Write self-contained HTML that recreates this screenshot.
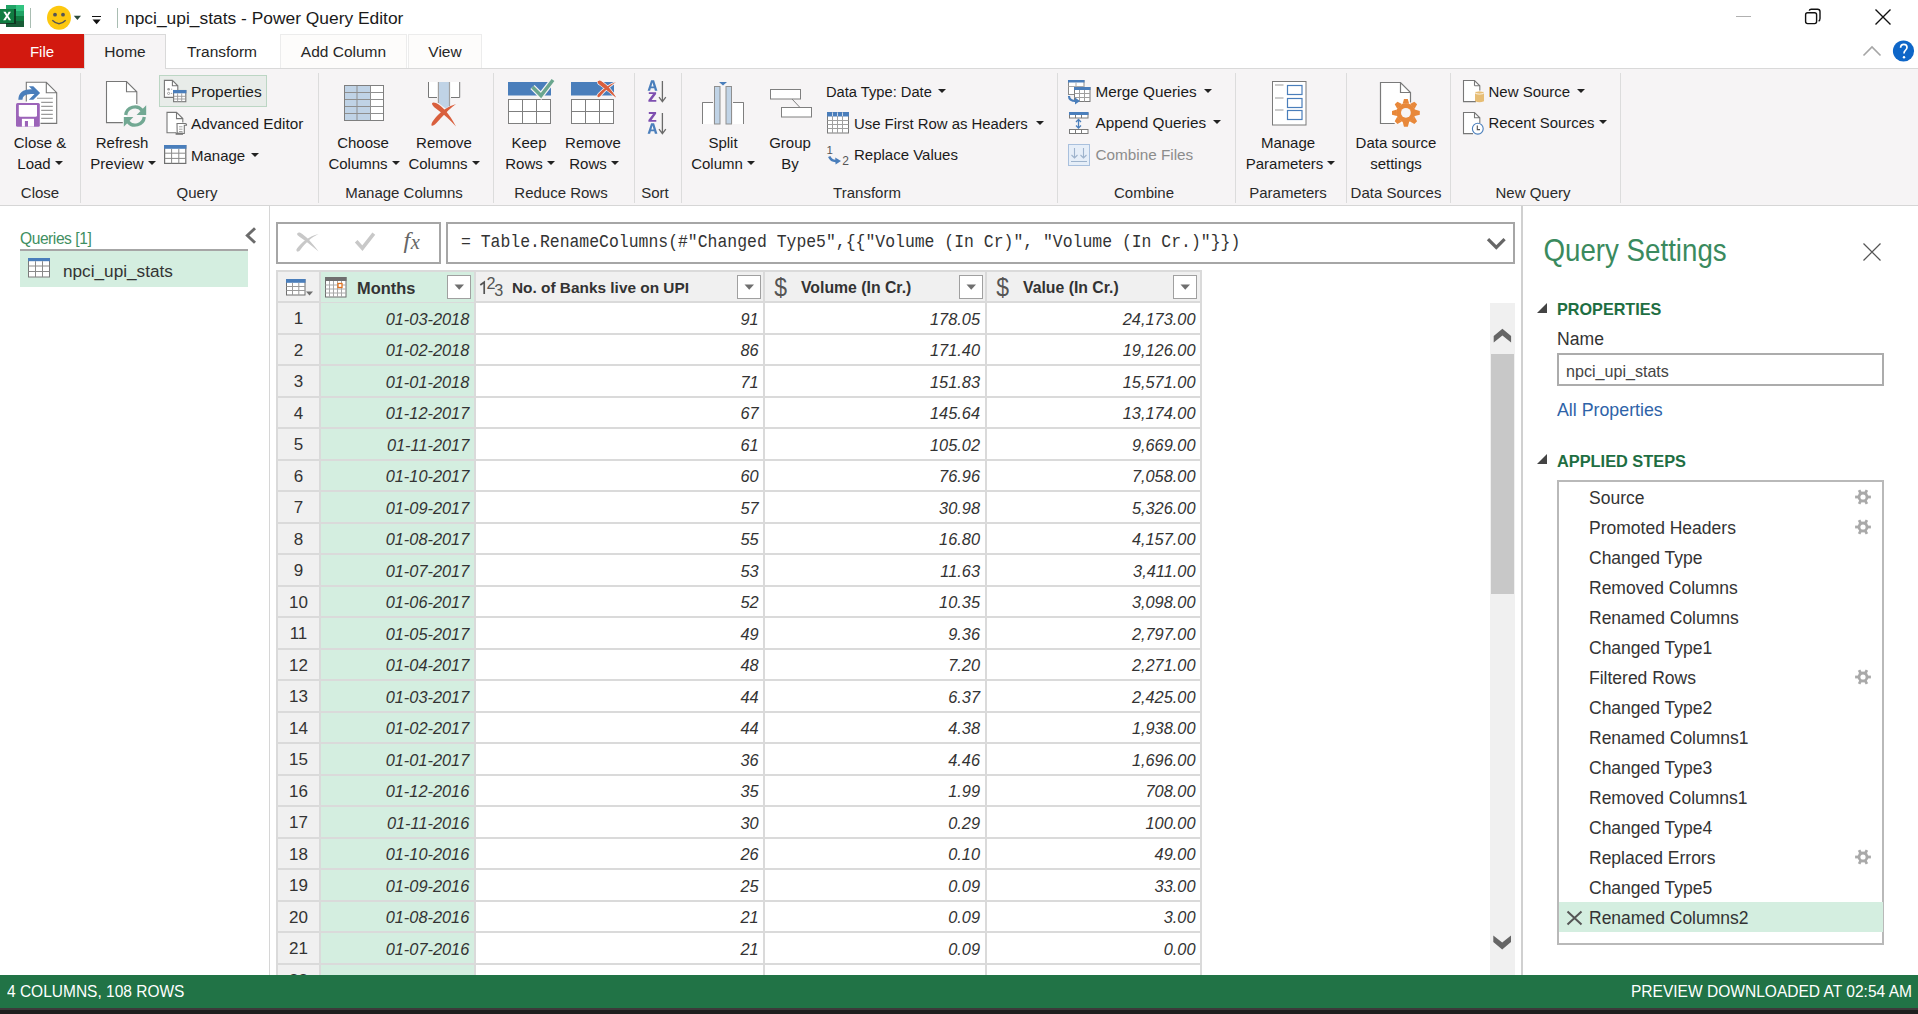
<!DOCTYPE html>
<html><head><meta charset="utf-8">
<style>
*{box-sizing:border-box;margin:0;padding:0}
html,body{width:1918px;height:1014px;overflow:hidden;background:#fff;font-family:"Liberation Sans",sans-serif;color:#262626}
.a{position:absolute;white-space:nowrap}
.t{position:absolute;white-space:nowrap;line-height:20px;height:20px}
.ribbon{position:absolute;left:0;top:69px;width:1918px;height:137px;background:#f6f4f5;border-bottom:1px solid #d6d6d6}
.sep{position:absolute;top:73px;width:1px;height:130px;background:#dcdcdc}
.glabel{position:absolute;top:182.8px;height:20px;line-height:20px;font-size:15px;color:#2a2a2a;text-align:center;white-space:nowrap}
.blabel{position:absolute;height:20px;line-height:20px;font-size:15px;color:#1b1b1b;margin-top:0.8px;text-align:center;white-space:nowrap}
.slabel{position:absolute;height:20px;line-height:20px;font-size:15px;color:#1b1b1b;white-space:nowrap}
.dd{display:inline-block;width:0;height:0;border-left:4px solid transparent;border-right:4px solid transparent;border-top:4px solid #222;vertical-align:middle;margin-left:4px;position:relative;top:-2px}
svg{position:absolute;overflow:visible}
.num{font-size:17px;color:#333}
.cell{font-size:16.35px;font-style:italic;color:#333;text-align:right}
.hdr{font-size:16.4px;font-weight:bold;color:#333;margin-top:0.8px}
.step{font-size:17.5px;color:#333}
</style></head><body>

<!-- TITLE BAR -->
<div class="a" style="left:0;top:0;width:1918px;height:34px;background:#fff"></div>
<svg style="left:0;top:4px" width="26" height="24" viewBox="0 0 26 24" shape-rendering="crispEdges">
 <rect x="6" y="1" width="18" height="6" fill="#33c481"/>
 <rect x="6" y="1" width="10" height="6" fill="#21a366"/>
 <rect x="6" y="7" width="18" height="5" fill="#21a366"/>
 <rect x="6" y="12" width="18" height="5" fill="#107c41"/>
 <rect x="6" y="17" width="18" height="6" fill="#185c37"/>
 <rect x="0" y="5" width="15.5" height="15" fill="#0e2e1c" opacity="0.85"/>
 <rect x="0" y="5" width="14" height="14" fill="#107c41"/>
 <path d="M3.3 7.8L6 12L3.1 16.2H5.6L7.2 13.4L8.8 16.2H11.1L8.3 12L10.9 7.8H8.6L7.2 10.5L5.7 7.8Z" fill="#fff" shape-rendering="geometricPrecision"/>
</svg>
<div class="a" style="left:30px;top:8px;width:1px;height:20px;background:#a9bdb2"></div>
<svg style="left:46px;top:5px" width="26" height="26" viewBox="0 0 26 26">
 <circle cx="13" cy="12.8" r="12" fill="#fdc80f"/>
 <circle cx="9" cy="9.7" r="1.9" fill="#555"/>
 <circle cx="17" cy="9.7" r="1.9" fill="#555"/>
 <path d="M6.3 15.3Q13 22 19.7 15.3" fill="none" stroke="#555" stroke-width="1.4"/>
</svg>
<svg style="left:73px;top:15px" width="9" height="6" viewBox="0 0 9 6"><path d="M0.8 0.8H8L4.4 5Z" fill="#2b4a3c"/></svg>
<div class="a" style="left:92px;top:16px;width:9px;height:1.3px;background:#111"></div>
<svg style="left:92px;top:19px" width="10" height="6" viewBox="0 0 10 6"><path d="M0.5 0.5H8.7L4.6 5.3Z" fill="#111"/></svg>
<div class="a" style="left:117px;top:8px;width:1px;height:20px;background:#a9bdb2"></div>
<div class="t" style="left:125px;top:7.7px;font-size:17.4px;color:#1a1a1a">npci_upi_stats - Power Query Editor</div>
<div class="a" style="left:1736px;top:16px;width:15px;height:1px;background:#b0b0b0"></div>
<svg style="left:1802px;top:7px" width="20" height="20" viewBox="0 0 20 20">
 <rect x="3.6" y="5.8" width="11" height="10.8" rx="2" fill="none" stroke="#111" stroke-width="1.4"/>
 <path d="M7.2 3.6Q7.6 2.2 9.2 2.2H15.6Q18 2.2 18 4.6V11.6Q18 13.6 16.6 14" fill="none" stroke="#111" stroke-width="1.4"/>
</svg>
<svg style="left:1874px;top:7.5px" width="18" height="18" viewBox="0 0 18 18">
 <path d="M1.5 1.5L16.5 16.5M16.5 1.5L1.5 16.5" stroke="#111" stroke-width="1.4"/>
</svg>

<!-- TABS -->
<div class="a" style="left:0;top:68px;width:1918px;height:1px;background:#d9d9d9"></div>
<div class="a" style="left:0;top:34px;width:84px;height:34px;background:#d2190f"></div>
<div class="t" style="left:0;top:41.8px;width:84px;text-align:center;color:#fff;font-size:15px">File</div>
<div class="a" style="left:84px;top:34px;width:82px;height:35px;background:#f6f4f5;border:1px solid #d9d9d9;border-bottom:none"></div>
<div class="t" style="left:84px;top:41.8px;width:82px;text-align:center;font-size:15.5px">Home</div>
<div class="t" style="left:166px;top:41.8px;width:112px;text-align:center;font-size:15.5px">Transform</div>
<div class="a" style="left:280px;top:34px;width:127px;height:34px;background:#fdfcfb;border:1px solid #ececec;border-bottom:none"></div>
<div class="t" style="left:280px;top:41.8px;width:127px;text-align:center;font-size:15.5px">Add Column</div>
<div class="a" style="left:408px;top:34px;width:74px;height:34px;background:#fdfcfb;border:1px solid #ececec;border-bottom:none"></div>
<div class="t" style="left:408px;top:41.8px;width:74px;text-align:center;font-size:15.5px">View</div>
<svg style="left:1862px;top:45px" width="20" height="12" viewBox="0 0 20 12">
 <path d="M1.5 10.5L10 2L18.5 10.5" fill="none" stroke="#a6a6a6" stroke-width="1.6"/>
</svg>
<svg style="left:1892px;top:40px" width="23" height="23" viewBox="0 0 23 23">
 <circle cx="11.5" cy="11" r="10.6" fill="#0e66c8"/>
 <path d="M8.6 7.8Q8.6 4.3 11.9 4.3Q15 4.3 15 7.3Q15 9.3 13.2 10.6Q12 11.5 12 13.6" fill="none" stroke="#fff" stroke-width="1.7"/>
 <circle cx="12" cy="17.3" r="1.2" fill="#fff"/>
</svg>

<!-- RIBBON -->
<div class="ribbon"></div>
<div class="sep" style="left:80px"></div>
<div class="sep" style="left:318px"></div>
<div class="sep" style="left:493px"></div>
<div class="sep" style="left:634px"></div>
<div class="sep" style="left:681px"></div>
<div class="sep" style="left:1057px"></div>
<div class="sep" style="left:1235px"></div>
<div class="sep" style="left:1346px"></div>
<div class="sep" style="left:1450px"></div>
<div class="sep" style="left:1620px"></div>

<div class="glabel" style="left:0;width:80px">Close</div>
<div class="glabel" style="left:137px;width:120px">Query</div>
<div class="glabel" style="left:344px;width:120px">Manage Columns</div>
<div class="glabel" style="left:501px;width:120px">Reduce Rows</div>
<div class="glabel" style="left:625px;width:60px">Sort</div>
<div class="glabel" style="left:807px;width:120px">Transform</div>
<div class="glabel" style="left:1084px;width:120px">Combine</div>
<div class="glabel" style="left:1228px;width:120px">Parameters</div>
<div class="glabel" style="left:1336px;width:120px">Data Sources</div>
<div class="glabel" style="left:1473px;width:120px">New Query</div>

<!-- Close & Load -->
<svg style="left:12px;top:78px" width="50" height="52" viewBox="12 78 50 52">
 <path d="M26.3 82.3H46.3L56.7 92.7V123.4H26.3Z" fill="#fff"/>
 <path d="M26.3 101.5V82.3H46.3L56.7 92.7V123.4H40.5M46.3 82.3V92.7H56.7" fill="none" stroke="#777" stroke-width="1.1" stroke-linejoin="miter"/>
 <path d="M37 98.3H52.8M41.2 102.4H52.8M41.2 106.4H52.8M41.2 110.4H52.8M41.2 114.4H52.8M41.2 118.4H52.8" stroke="#9a9a9a" stroke-width="1.1"/>
 <path d="M16 104.5Q16 103 17.5 103H38.3Q39.8 103 39.8 104.5V125.3Q39.8 126.8 38.3 126.8H17.5Q16 126.8 16 125.3Z" fill="#9c64b9"/>
 <path d="M18.8 105H37V115.3Q37 116.8 35.5 116.8H20.3Q18.8 116.8 18.8 115.3Z" fill="#fff"/>
 <path d="M21.9 118.8H34V126.6H21.9Z" fill="#fff"/>
 <rect x="24.9" y="121" width="3.1" height="5.6" fill="#9c64b9"/>
 <path d="M28.8 86.2H33.3L40.1 92.9L33.3 99.7H28.8L35.5 92.9Z" fill="#4a7ebb" stroke="#fff" stroke-width="0.8" paint-order="stroke"/>
 <path d="M18.3 99.7H22.4Q22.6 94.3 31 94.1H36V89.2H31Q18.5 89.4 18.3 99.7Z" fill="#4a7ebb"/>
</svg>
<div class="blabel" style="left:0;top:132px;width:80px">Close &amp;</div>
<div class="blabel" style="left:0;top:153px;width:80px;padding-left:0px">Load<span class="dd"></span></div>

<!-- Refresh Preview -->
<svg style="left:100px;top:76px" width="50" height="54" viewBox="100 76 50 54">
 <path d="M106.5 81.5H126.5L136.8 91.8V122.6H106.5Z" fill="#fff"/>
 <path d="M122.8 122.6H106.5V81.5H126.5L136.8 91.8V104M126.5 81.5V91.8H136.8" fill="none" stroke="#777" stroke-width="1.1" stroke-linejoin="miter"/>
 <circle cx="135" cy="116" r="8" fill="#f6f4f5"/>
 <path d="M125.7 115A9.3 9.3 0 0 1 142.2 110.4" fill="none" stroke="#72a893" stroke-width="3.3"/>
 <path d="M146.2 105.3V115H136.6Z" fill="#72a893"/>
 <path d="M144.3 117A9.3 9.3 0 0 1 127.8 121.6" fill="none" stroke="#72a893" stroke-width="3.3"/>
 <path d="M123.8 126.7V117H133.4Z" fill="#72a893"/>
</svg>
<div class="blabel" style="left:62px;top:132px;width:120px">Refresh</div>
<div class="blabel" style="left:62px;top:153px;width:120px;padding-left:2px">Preview<span class="dd"></span></div>

<!-- Properties / Advanced / Manage -->
<div class="a" style="left:159px;top:75px;width:108px;height:32px;background:#e8ece9;border:1px solid #bcd6c4"></div>
<svg style="left:160px;top:76px" width="30" height="30" viewBox="160 76 30 30">
 <path d="M164.4 80.4H172.4L177.8 85.8V97.4H164.4Z" fill="#fff"/>
 <path d="M173 97.4H164.4V80.4H172.4L177.8 85.8V90M172.4 80.4V85.8H177.8" fill="none" stroke="#777" stroke-width="1.1" stroke-linejoin="miter"/>
 <circle cx="168.6" cy="89.2" r="1.3" fill="#999"/>
 <circle cx="168.6" cy="93.4" r="1.1" fill="none" stroke="#999" stroke-width="0.9"/>
 <path d="M171 89.2H172.2M171 93.4H172.2" stroke="#999" stroke-width="0.9"/>
 <rect x="173.6" y="90.5" width="12.2" height="11.2" fill="#fff" stroke="#777" stroke-width="1.1"/>
 <rect x="173" y="90" width="13.4" height="3.3" fill="#4a7ebb"/>
 <path d="M173.6 96.3H185.8M173.6 99H185.8M177.6 93.3V101.7M181.7 93.3V101.7" stroke="#999" stroke-width="0.9"/>
</svg>
<div class="slabel" style="left:191px;top:81.5px;font-size:15.5px">Properties</div>
<svg style="left:162px;top:108px" width="30" height="30" viewBox="162 108 30 30">
 <path d="M167 112.4H176.5L182.8 118.6V132.8H167Z" fill="#fff"/>
 <path d="M176 132.8H167V112.4H176.5L182.8 118.6V122.5M176.5 112.4V118.6H182.8" fill="none" stroke="#777" stroke-width="1.1" stroke-linejoin="miter"/>
 <path d="M177 123.5H185.2Q186.8 123.8 186.5 125.3H184.3V133.5H177.2Z" fill="#fff" stroke="#777" stroke-width="1.1" stroke-linejoin="miter"/>
 <path d="M179 126.8H182.5M179 129.2H182.5M179 131.5H182.5" stroke="#999" stroke-width="0.9"/>
 <rect x="175.6" y="132.6" width="7.4" height="2.2" fill="#777"/>
</svg>
<div class="slabel" style="left:191px;top:113.5px;font-size:15.3px">Advanced Editor</div>
<svg style="left:160px;top:142px" width="30" height="26" viewBox="160 142 30 26">
 <rect x="164.6" y="145.6" width="21.2" height="17.8" fill="#fff" stroke="#707070" stroke-width="1.2"/>
 <rect x="164" y="145" width="22.4" height="3.8" fill="#4a7ebb"/>
 <path d="M164.6 153.2H185.8M164.6 158.4H185.8M171.6 148.8V163.4M178.8 148.8V163.4" stroke="#8a8a8a" stroke-width="1"/>
</svg>
<div class="slabel" style="left:191px;top:145.6px">Manage<span class="dd" style="margin-left:6px"></span></div>

<!-- Choose Columns -->
<svg style="left:343px;top:84px" width="42" height="38" viewBox="0 0 42 38">
 <rect x="1.5" y="1.5" width="39" height="35" fill="#fff" stroke="#7f7f7f"/>
 <rect x="2" y="2" width="25.5" height="34" fill="#c0d3e6"/>
 <path d="M1.5 8.5H40.5M1.5 15.5H40.5M1.5 22.5H40.5M1.5 29.5H40.5M14 1.5V36.5M27.5 1.5V36.5" stroke="#8f8f8f"/>
 <rect x="1.5" y="1.5" width="39" height="35" fill="none" stroke="#7f7f7f"/>
</svg>
<div class="blabel" style="left:303px;top:132px;width:120px">Choose</div>
<div class="blabel" style="left:303px;top:153px;width:120px;padding-left:2px">Columns<span class="dd"></span></div>

<!-- Remove Columns -->
<svg style="left:425px;top:80px" width="38" height="50" viewBox="0 0 38 50">
 <rect x="3.5" y="2" width="31" height="15.5" fill="#fff"/>
 <path d="M3.5 2V17.5H12M26 17.5H34.7V2" fill="none" stroke="#777"/>
 <path d="M13.4 2V23L20.5 28.6L24.5 26V2Z" fill="#c0d3e6"/>
 <path d="M13.4 2V23M24.5 2V26" fill="none" stroke="#a0a0a0" stroke-width="1.2"/>
 <path d="M6.5 45.5C6 43 9 39 14 34C20 28.5 26 25.5 31 24C26 27.5 20.5 33 15.5 38.5C11.5 43 9 46.5 6.5 45.5Z" fill="#d95f3d"/>
 <path d="M7.5 25C6 23 8 21.5 11 23C17 26 24 33 31 46.5C25 40 19 34.5 13.5 30.5C10 28 8.5 26.5 7.5 25Z" fill="#d95f3d"/>
</svg>
<div class="blabel" style="left:384px;top:132px;width:120px">Remove</div>
<div class="blabel" style="left:384px;top:153px;width:120px;padding-left:0px">Columns<span class="dd"></span></div>

<!-- Keep Rows -->
<svg style="left:506px;top:78px" width="50" height="48" viewBox="0 0 50 48">
 <rect x="2" y="4" width="43" height="13.5" fill="#4a7ebb"/>
 <rect x="2.5" y="21.5" width="42" height="24" fill="#fff" stroke="#7f7f7f"/>
 <path d="M2.5 33.5H44.5M16.5 21.5V45.5M30.5 21.5V45.5" stroke="#7f7f7f"/>
 <path d="M26.5 9L35 17.5L47 2" fill="none" stroke="#f6f4f5" stroke-width="6"/>
 <path d="M26.5 9L35 17.5L47 2" fill="none" stroke="#6aa68e" stroke-width="3.5"/>
</svg>
<div class="blabel" style="left:469px;top:132px;width:120px">Keep</div>
<div class="blabel" style="left:469px;top:153px;width:120px;padding-left:2px">Rows<span class="dd"></span></div>

<!-- Remove Rows -->
<svg style="left:569px;top:78px" width="50" height="48" viewBox="0 0 50 48">
 <rect x="2" y="4" width="43" height="13.5" fill="#4a7ebb"/>
 <rect x="2.5" y="21.5" width="42" height="24" fill="#fff" stroke="#7f7f7f"/>
 <path d="M2.5 33.5H44.5M16.5 21.5V45.5M30.5 21.5V45.5" stroke="#7f7f7f"/>
 <g fill="#d95f3d" stroke="#f6f4f5" stroke-width="1.6" paint-order="stroke">
  <path d="M29 5C28 3.2 30 2.2 32 3.2C37 6 43 12.5 47 19.6C42 15 36 10.5 31.5 7.2C30.3 6.4 29.5 5.8 29 5Z"/>
  <path d="M29.2 19.2C27.8 18.6 28.3 17 29.5 15.8C34 11 40 6.5 47 4C42 7.5 36.5 12 32.5 16.8C31.3 18.2 30.2 19.4 29.2 19.2Z"/>
 </g>
 <g fill="#d95f3d">
  <path d="M29 5C28 3.2 30 2.2 32 3.2C37 6 43 12.5 47 19.6C42 15 36 10.5 31.5 7.2C30.3 6.4 29.5 5.8 29 5Z"/>
 </g>
</svg>
<div class="blabel" style="left:533px;top:132px;width:120px">Remove</div>
<div class="blabel" style="left:533px;top:153px;width:120px;padding-left:2px">Rows<span class="dd"></span></div>

<!-- Sort -->
<svg style="left:640px;top:74px" width="40" height="66" viewBox="640 74 40 66">
 <g fill-rule="evenodd" fill="#4a7ebb">
  <path d="M647.6 90.7L651.1 80.2H654.1L657.4 90.7H654.9L654.2 88.3H650.8L650.1 90.7ZM651.4 86.4H653.6L652.5 82.6Z"/>
  <path d="M647.6 133.7L651.1 123.2H654.1L657.4 133.7H654.9L654.2 131.3H650.8L650.1 133.7ZM651.4 129.4H653.6L652.5 125.6Z"/>
 </g>
 <g fill="#7e4fb0">
  <path d="M648.8 92.3H656.1V94.1L651.6 100H656.3V101.8H648.4V100.1L653 94.1H648.8Z"/>
  <path d="M648.8 112H656.1V113.8L651.6 119.9H656.3V121.8H648.4V120L653 113.9H648.8Z"/>
 </g>
 <path d="M662.4 81V101.5M659 97.2L662.4 101.6L665.8 97.2M662.4 113V133.5M659 129.2L662.4 133.6L665.8 129.2" fill="none" stroke="#6a6a6a" stroke-width="1.3"/>
</svg>

<!-- Split Column -->
<svg style="left:700px;top:80px" width="46" height="46" viewBox="0 0 46 46">
 <path d="M2.5 44V22.5H13" fill="#fff" stroke="#7f7f7f"/>
 <rect x="2.5" y="22.5" width="10.5" height="21.5" fill="#fff"/>
 <path d="M2.5 44V22.5H13" fill="none" stroke="#7f7f7f"/>
 <path d="M43.5 44V22.5H33" fill="#fff" stroke="#7f7f7f"/>
 <rect x="33" y="22.5" width="10.5" height="21.5" fill="#fff"/>
 <path d="M43.5 44V22.5H33" fill="none" stroke="#7f7f7f"/>
 <rect x="14.5" y="6.5" width="5.5" height="37.5" fill="#c0d3e6" stroke="#8f8f8f"/>
 <rect x="26" y="6.5" width="5.5" height="37.5" fill="#c0d3e6" stroke="#8f8f8f"/>
 <path d="M19 2H27L23 5.5Z" fill="#4a7ebb"/>
</svg>
<div class="blabel" style="left:663px;top:132px;width:120px">Split</div>
<div class="blabel" style="left:663px;top:153px;width:120px;padding-left:0px">Column<span class="dd"></span></div>

<!-- Group By -->
<svg style="left:768px;top:87px" width="46" height="32" viewBox="0 0 46 32">
 <rect x="2.5" y="2.5" width="30" height="9.5" fill="#fff" stroke="#7f7f7f"/>
 <rect x="13.5" y="20.5" width="30" height="9.5" fill="#fff" stroke="#7f7f7f"/>
 <path d="M24 12L32 20.5" stroke="#7f7f7f"/>
</svg>
<div class="blabel" style="left:730px;top:132px;width:120px">Group</div>
<div class="blabel" style="left:730px;top:153px;width:120px">By</div>

<!-- Transform small -->
<div class="slabel" style="left:826px;top:81.8px;font-size:14.7px">Data Type: Date<span class="dd" style="margin-left:6px"></span></div>
<svg style="left:826px;top:111px" width="24" height="24" viewBox="0 0 24 24">
 <rect x="1.5" y="1.5" width="21" height="20.5" fill="#fff" stroke="#7a7a7a"/>
 <rect x="1" y="1" width="22" height="4.5" fill="#4a7ebb"/>
 <path d="M1.5 9.5H22.5M1.5 13.5H22.5M1.5 17.5H22.5M6.5 1.5V22M11.5 1.5V22M16.5 1.5V22" stroke="#a0a0a0"/>
 <path d="M6.5 1.5V5M11.5 1.5V5M16.5 1.5V5" stroke="#c9d8ec"/>
</svg>
<div class="slabel" style="left:854px;top:113.5px;font-size:14.9px">Use First Row as Headers<span class="dd" style="margin-left:8px"></span></div>
<svg style="left:824px;top:143px" width="28" height="26" viewBox="0 0 28 26">
 <text x="2.4" y="11" font-family="Liberation Sans" font-size="11.5" fill="#555">1</text>
 <text x="18.2" y="21.8" font-family="Liberation Sans" font-size="12" fill="#555">2</text>
 <path d="M5.2 13.6Q7.2 18.3 12.2 18" fill="none" stroke="#4a7ebb" stroke-width="2.5"/>
 <path d="M11.2 14.4L17 18L11.6 21.6Z" fill="#4a7ebb"/>
</svg>
<div class="slabel" style="left:854px;top:145.3px;font-size:15px">Replace Values</div>

<!-- Combine -->
<svg style="left:1066px;top:79px" width="26" height="26" viewBox="0 0 26 26">
 <rect x="2.5" y="1.5" width="15.5" height="14" fill="#fff" stroke="#8a8a8a"/>
 <rect x="2" y="1" width="16.5" height="2.5" fill="#4a7ebb"/>
 <path d="M2.5 7.5H18M10 3.5V15.5" stroke="#aaa"/>
 <rect x="8.5" y="8.5" width="15.5" height="14" fill="#fff" stroke="#7a7a7a"/>
 <rect x="8" y="8" width="16.5" height="3" fill="#4a7ebb"/>
 <path d="M8.5 14.5H24M8.5 18.5H24M13.5 11V22.5M18.5 11V22.5" stroke="#a0a0a0"/>
 <path d="M3 17C3 21 6 22 10 22" fill="none" stroke="#4a7ebb" stroke-width="2.2"/>
 <path d="M9 18.5L14 22L9 25.5Z" fill="#4a7ebb"/>
</svg>
<div class="slabel" style="left:1095.5px;top:81.8px;font-size:15.3px">Merge Queries<span class="dd" style="margin-left:7.5px"></span></div>
<svg style="left:1067px;top:111px" width="24" height="24" viewBox="0 0 24 24">
 <rect x="2.5" y="2" width="18.5" height="5" fill="#fff" stroke="#7a7a7a"/>
 <rect x="2" y="1" width="19.5" height="3" fill="#4a7ebb"/>
 <path d="M8.5 4V7M14.5 4V7" stroke="#7a7a7a"/>
 <rect x="2.5" y="18.5" width="18.5" height="4" fill="#fff" stroke="#7a7a7a"/>
 <path d="M8.5 18.5V22.5M14.5 18.5V22.5" stroke="#7a7a7a"/>
 <path d="M11.5 9V16.5" stroke="#4a7ebb" stroke-width="1.3"/>
 <path d="M9 11L11.5 8.5L14 11M9 14.5L11.5 17L14 14.5" fill="none" stroke="#4a7ebb" stroke-width="1.3"/>
</svg>
<div class="slabel" style="left:1095.5px;top:113.2px;font-size:15.3px">Append Queries<span class="dd" style="margin-left:7px"></span></div>
<svg style="left:1067px;top:143px" width="24" height="24" viewBox="0 0 24 24">
 <rect x="1.5" y="1.5" width="21" height="21" fill="#e6eef8" stroke="#a9c0dd"/>
 <path d="M7.5 5V15M4.5 12L7.5 15L10.5 12M16.5 5V15M13.5 12L16.5 15L19.5 12M4 18.5H20" fill="none" stroke="#9eb3cc" stroke-width="1.1"/>
</svg>
<div class="slabel" style="left:1095.5px;top:145.2px;font-size:15.3px;color:#8c8c8c">Combine Files</div>

<!-- Manage Parameters -->
<svg style="left:1271px;top:80px" width="37" height="46" viewBox="0 0 37 46">
 <rect x="1.5" y="1.5" width="33.5" height="43.5" fill="#fff" stroke="#7a7a7a"/>
 <path d="M4 5H12.5M4 18H12.5M4 30H12.5" stroke="#999"/>
 <rect x="16.5" y="5.5" width="14.5" height="9" fill="none" stroke="#4a7ebb" stroke-width="1.2"/>
 <rect x="16.5" y="18.5" width="14.5" height="9" fill="none" stroke="#4a7ebb" stroke-width="1.2"/>
 <rect x="16.5" y="30.5" width="14.5" height="9" fill="none" stroke="#4a7ebb" stroke-width="1.2"/>
</svg>
<div class="blabel" style="left:1228px;top:132px;width:120px">Manage</div>
<div class="blabel" style="left:1228px;top:153px;width:120px;padding-left:5px">Parameters<span class="dd"></span></div>

<!-- Data source settings -->
<svg style="left:1378px;top:80px" width="44" height="50" viewBox="0 0 44 50">
 <path d="M2.5 2.5H22.5L32.5 12.5V43.5H2.5Z" fill="#fff"/>
 <path d="M16.7 43.5H2.5V2.5H22.5L32.5 12.5V22.5M22.5 2.5V12.5H32.5" fill="none" stroke="#7a7a7a" stroke-width="1.2" stroke-linejoin="miter"/>
 <g transform="translate(27.9 32.8)">
  <g fill="#e8883a"><path d="M-3.3 -9L-1.9 -13.9H1.9L3.3 -9Z" transform="rotate(0)"/><path d="M-3.3 -9L-1.9 -13.9H1.9L3.3 -9Z" transform="rotate(45)"/><path d="M-3.3 -9L-1.9 -13.9H1.9L3.3 -9Z" transform="rotate(90)"/><path d="M-3.3 -9L-1.9 -13.9H1.9L3.3 -9Z" transform="rotate(135)"/><path d="M-3.3 -9L-1.9 -13.9H1.9L3.3 -9Z" transform="rotate(180)"/><path d="M-3.3 -9L-1.9 -13.9H1.9L3.3 -9Z" transform="rotate(225)"/><path d="M-3.3 -9L-1.9 -13.9H1.9L3.3 -9Z" transform="rotate(270)"/><path d="M-3.3 -9L-1.9 -13.9H1.9L3.3 -9Z" transform="rotate(315)"/><circle r="9.6"/></g>
  <circle r="4.9" fill="#f6f4f5"/>
 </g>
</svg>
<div class="blabel" style="left:1336px;top:132px;width:120px">Data source</div>
<div class="blabel" style="left:1336px;top:153px;width:120px">settings</div>

<!-- New Query -->
<svg style="left:1458px;top:76px" width="30" height="30" viewBox="1458 76 30 30">
 <path d="M1463.5 80.5H1474.5L1479.8 85.8V101.6H1463.5Z" fill="#fff"/>
 <path d="M1476 101.6H1463.5V80.5H1474.5L1479.8 85.8V91" fill="none" stroke="#777" stroke-width="1.1" stroke-linejoin="miter"/>
 <path d="M1474.6 85.7H1479.8M1474.5 80.5V85.8" stroke="#777" stroke-width="1.1"/>
 <path d="M1475 93.5V101.2Q1479.5 103.5 1484 101.2V93.5Z" fill="#e7bd74"/>
 <ellipse cx="1479.5" cy="92.5" rx="4.5" ry="1.6" fill="#e7bd74" stroke="#fff" stroke-width="0.8"/>
</svg>
<div class="slabel" style="left:1488.5px;top:81.8px;font-size:15px">New Source<span class="dd" style="margin-left:6.5px"></span></div>
<svg style="left:1458px;top:108px" width="30" height="30" viewBox="1458 108 30 30">
 <path d="M1463.5 112.5H1474.5L1479.8 117.8V133.6H1463.5Z" fill="#fff"/>
 <path d="M1473 133.6H1463.5V112.5H1474.5L1479.8 117.8V123M1474.5 112.5V117.8H1479.8" fill="none" stroke="#777" stroke-width="1.1" stroke-linejoin="miter"/>
 <circle cx="1477.8" cy="128.7" r="5.4" fill="#fff" stroke="#4a7ebb" stroke-width="1.1"/>
 <path d="M1477.3 125.6V129.6H1480" fill="none" stroke="#555" stroke-width="1.1"/>
</svg>
<div class="slabel" style="left:1488.5px;top:113.3px;font-size:14.9px">Recent Sources<span class="dd" style="margin-left:5px"></span></div>

<!-- BELOW -->
<svg width="0" height="0" style="position:absolute;left:0;top:0">
 <symbol id="gearsym" viewBox="-9 -9 18 18">
  <g fill="#a9a9a9">
   <circle r="5.4"/>
   <rect x="3.5" y="-1.4" width="4.4" height="2.8"/>
   <rect x="3.5" y="-1.4" width="4.4" height="2.8" transform="rotate(60)"/>
   <rect x="3.5" y="-1.4" width="4.4" height="2.8" transform="rotate(120)"/>
   <rect x="3.5" y="-1.4" width="4.4" height="2.8" transform="rotate(180)"/>
   <rect x="3.5" y="-1.4" width="4.4" height="2.8" transform="rotate(240)"/>
   <rect x="3.5" y="-1.4" width="4.4" height="2.8" transform="rotate(300)"/>
  </g>
  <circle r="2.6" fill="#fff"/>
 </symbol>
</svg>

<!-- Queries pane -->
<div class="a" style="left:269px;top:206px;width:1px;height:769px;background:#d6d6d6"></div>
<div class="t" style="left:20px;top:228.6px;font-size:15.6px;letter-spacing:-0.45px;color:#3f8f62">Queries [1]</div>
<svg style="left:243px;top:226px" width="16" height="20" viewBox="0 0 16 20">
 <path d="M12 2.2L4.3 9.5L12 16.8" fill="none" stroke="#6b6b6b" stroke-width="2.9"/>
</svg>
<div class="a" style="left:20px;top:249px;width:228px;height:2px;background:#a6a6a6"></div>
<div class="a" style="left:20px;top:251px;width:228px;height:36px;background:#d4eee0"></div>
<svg style="left:27px;top:257px" width="25" height="22" viewBox="0 0 25 22">
 <rect x="1.5" y="1.5" width="21" height="18.5" fill="#fff" stroke="#7a7a7a"/>
 <rect x="1" y="1" width="22" height="3.2" fill="#4a7ebb"/>
 <path d="M1.5 9H22.5M1.5 14.5H22.5M8.5 4.2V20M15.5 4.2V20" stroke="#8a8a8a"/>
</svg>
<div class="t" style="left:63px;top:260.8px;font-size:17.2px;color:#333">npci_upi_stats</div>

<!-- Formula bar -->
<div class="a" style="left:276px;top:222px;width:165px;height:42px;border:2px solid #a6a6a6;background:#fff"></div>
<svg style="left:290px;top:226px" width="140" height="32" viewBox="290 226 140 32">
 <path d="M297.3 234.8C296.5 233 298.5 231.8 300.3 232.8C305.5 235.8 312 242.5 318.6 251.6C312.5 246.5 306 241 300.5 237.5C299 236.5 298 235.8 297.3 234.8Z" fill="#c8c8c8"/>
 <path d="M298.2 251.6C296.5 252 295.8 250.3 297 248.6C301.5 242.5 309 236 318.6 234C311 237.5 305 243.5 300.6 249.5C299.8 250.6 299 251.4 298.2 251.6Z" fill="#c8c8c8"/>
 <path d="M356.2 241.2L362.4 248.2L373.8 233.6" fill="none" stroke="#c8c8c8" stroke-width="3.6"/>
 <text x="403.5" y="247.8" font-family="Liberation Serif" font-style="italic" font-size="24" fill="#666">f</text>
 <text x="410.8" y="248.8" font-family="Liberation Serif" font-style="italic" font-size="20.5" fill="#666">x</text>
</svg>
<div class="a" style="left:446px;top:222px;width:1069px;height:42px;border:2px solid #a6a6a6;background:#fff"></div>
<div class="t" style="left:461px;top:233.3px;font-family:'Liberation Mono',monospace;font-size:16.45px;color:#333;transform:scaleY(1.13);transform-origin:0 15px">= Table.RenameColumns(#"Changed Type5",{{"Volume (In Cr)", "Volume (In Cr.)"}})</div>
<svg style="left:1485px;top:236px" width="22" height="15" viewBox="0 0 22 15">
 <path d="M3 3.2L11.3 11.5L19.6 3.2" fill="none" stroke="#666" stroke-width="3.2"/>
</svg>

<!-- Grid -->
<div class="a" style="left:276px;top:270px;width:926px;height:705px;background:#dadada"></div>
<div class="a" style="left:278px;top:272px;width:41px;height:29px;background:#f0f0f0"></div>
<div class="a" style="left:321px;top:272px;width:153px;height:30px;background:#d4eee0"></div>
<div class="a" style="left:476px;top:272px;width:287px;height:29px;background:#f0f0f0"></div>
<div class="a" style="left:765px;top:272px;width:220px;height:29px;background:#f0f0f0"></div>
<div class="a" style="left:987px;top:272px;width:213px;height:29px;background:#f0f0f0"></div>
<div class="a" style="left:278px;top:303.0px;width:41px;height:29.5px;background:#f0f0f0"></div>
<div class="a" style="left:321px;top:303.0px;width:153px;height:29.5px;background:#d4eee0"></div>
<div class="a" style="left:476px;top:303.0px;width:287px;height:29.5px;background:#fff"></div>
<div class="a" style="left:765px;top:303.0px;width:220px;height:29.5px;background:#fff"></div>
<div class="a" style="left:987px;top:303.0px;width:213px;height:29.5px;background:#fff"></div>
<div class="t num" style="left:278px;top:309.1px;width:41px;text-align:center">1</div>
<div class="t cell" style="left:321px;top:308.5px;width:148.3px">01-03-2018</div>
<div class="t cell" style="left:476px;top:308.5px;width:282.7px">91</div>
<div class="t cell" style="left:765px;top:308.5px;width:215px">178.05</div>
<div class="t cell" style="left:987px;top:308.5px;width:208.5px">24,173.00</div>
<div class="a" style="left:278px;top:334.5px;width:41px;height:29.5px;background:#f0f0f0"></div>
<div class="a" style="left:321px;top:334.5px;width:153px;height:29.5px;background:#d4eee0"></div>
<div class="a" style="left:476px;top:334.5px;width:287px;height:29.5px;background:#fff"></div>
<div class="a" style="left:765px;top:334.5px;width:220px;height:29.5px;background:#fff"></div>
<div class="a" style="left:987px;top:334.5px;width:213px;height:29.5px;background:#fff"></div>
<div class="t num" style="left:278px;top:340.6px;width:41px;text-align:center">2</div>
<div class="t cell" style="left:321px;top:340.0px;width:148.3px">01-02-2018</div>
<div class="t cell" style="left:476px;top:340.0px;width:282.7px">86</div>
<div class="t cell" style="left:765px;top:340.0px;width:215px">171.40</div>
<div class="t cell" style="left:987px;top:340.0px;width:208.5px">19,126.00</div>
<div class="a" style="left:278px;top:366.0px;width:41px;height:29.5px;background:#f0f0f0"></div>
<div class="a" style="left:321px;top:366.0px;width:153px;height:29.5px;background:#d4eee0"></div>
<div class="a" style="left:476px;top:366.0px;width:287px;height:29.5px;background:#fff"></div>
<div class="a" style="left:765px;top:366.0px;width:220px;height:29.5px;background:#fff"></div>
<div class="a" style="left:987px;top:366.0px;width:213px;height:29.5px;background:#fff"></div>
<div class="t num" style="left:278px;top:372.1px;width:41px;text-align:center">3</div>
<div class="t cell" style="left:321px;top:371.5px;width:148.3px">01-01-2018</div>
<div class="t cell" style="left:476px;top:371.5px;width:282.7px">71</div>
<div class="t cell" style="left:765px;top:371.5px;width:215px">151.83</div>
<div class="t cell" style="left:987px;top:371.5px;width:208.5px">15,571.00</div>
<div class="a" style="left:278px;top:397.5px;width:41px;height:29.5px;background:#f0f0f0"></div>
<div class="a" style="left:321px;top:397.5px;width:153px;height:29.5px;background:#d4eee0"></div>
<div class="a" style="left:476px;top:397.5px;width:287px;height:29.5px;background:#fff"></div>
<div class="a" style="left:765px;top:397.5px;width:220px;height:29.5px;background:#fff"></div>
<div class="a" style="left:987px;top:397.5px;width:213px;height:29.5px;background:#fff"></div>
<div class="t num" style="left:278px;top:403.6px;width:41px;text-align:center">4</div>
<div class="t cell" style="left:321px;top:403.0px;width:148.3px">01-12-2017</div>
<div class="t cell" style="left:476px;top:403.0px;width:282.7px">67</div>
<div class="t cell" style="left:765px;top:403.0px;width:215px">145.64</div>
<div class="t cell" style="left:987px;top:403.0px;width:208.5px">13,174.00</div>
<div class="a" style="left:278px;top:429.0px;width:41px;height:29.5px;background:#f0f0f0"></div>
<div class="a" style="left:321px;top:429.0px;width:153px;height:29.5px;background:#d4eee0"></div>
<div class="a" style="left:476px;top:429.0px;width:287px;height:29.5px;background:#fff"></div>
<div class="a" style="left:765px;top:429.0px;width:220px;height:29.5px;background:#fff"></div>
<div class="a" style="left:987px;top:429.0px;width:213px;height:29.5px;background:#fff"></div>
<div class="t num" style="left:278px;top:435.1px;width:41px;text-align:center">5</div>
<div class="t cell" style="left:321px;top:434.5px;width:148.3px">01-11-2017</div>
<div class="t cell" style="left:476px;top:434.5px;width:282.7px">61</div>
<div class="t cell" style="left:765px;top:434.5px;width:215px">105.02</div>
<div class="t cell" style="left:987px;top:434.5px;width:208.5px">9,669.00</div>
<div class="a" style="left:278px;top:460.5px;width:41px;height:29.5px;background:#f0f0f0"></div>
<div class="a" style="left:321px;top:460.5px;width:153px;height:29.5px;background:#d4eee0"></div>
<div class="a" style="left:476px;top:460.5px;width:287px;height:29.5px;background:#fff"></div>
<div class="a" style="left:765px;top:460.5px;width:220px;height:29.5px;background:#fff"></div>
<div class="a" style="left:987px;top:460.5px;width:213px;height:29.5px;background:#fff"></div>
<div class="t num" style="left:278px;top:466.6px;width:41px;text-align:center">6</div>
<div class="t cell" style="left:321px;top:466.0px;width:148.3px">01-10-2017</div>
<div class="t cell" style="left:476px;top:466.0px;width:282.7px">60</div>
<div class="t cell" style="left:765px;top:466.0px;width:215px">76.96</div>
<div class="t cell" style="left:987px;top:466.0px;width:208.5px">7,058.00</div>
<div class="a" style="left:278px;top:492.0px;width:41px;height:29.5px;background:#f0f0f0"></div>
<div class="a" style="left:321px;top:492.0px;width:153px;height:29.5px;background:#d4eee0"></div>
<div class="a" style="left:476px;top:492.0px;width:287px;height:29.5px;background:#fff"></div>
<div class="a" style="left:765px;top:492.0px;width:220px;height:29.5px;background:#fff"></div>
<div class="a" style="left:987px;top:492.0px;width:213px;height:29.5px;background:#fff"></div>
<div class="t num" style="left:278px;top:498.1px;width:41px;text-align:center">7</div>
<div class="t cell" style="left:321px;top:497.5px;width:148.3px">01-09-2017</div>
<div class="t cell" style="left:476px;top:497.5px;width:282.7px">57</div>
<div class="t cell" style="left:765px;top:497.5px;width:215px">30.98</div>
<div class="t cell" style="left:987px;top:497.5px;width:208.5px">5,326.00</div>
<div class="a" style="left:278px;top:523.5px;width:41px;height:29.5px;background:#f0f0f0"></div>
<div class="a" style="left:321px;top:523.5px;width:153px;height:29.5px;background:#d4eee0"></div>
<div class="a" style="left:476px;top:523.5px;width:287px;height:29.5px;background:#fff"></div>
<div class="a" style="left:765px;top:523.5px;width:220px;height:29.5px;background:#fff"></div>
<div class="a" style="left:987px;top:523.5px;width:213px;height:29.5px;background:#fff"></div>
<div class="t num" style="left:278px;top:529.6px;width:41px;text-align:center">8</div>
<div class="t cell" style="left:321px;top:529.0px;width:148.3px">01-08-2017</div>
<div class="t cell" style="left:476px;top:529.0px;width:282.7px">55</div>
<div class="t cell" style="left:765px;top:529.0px;width:215px">16.80</div>
<div class="t cell" style="left:987px;top:529.0px;width:208.5px">4,157.00</div>
<div class="a" style="left:278px;top:555.0px;width:41px;height:29.5px;background:#f0f0f0"></div>
<div class="a" style="left:321px;top:555.0px;width:153px;height:29.5px;background:#d4eee0"></div>
<div class="a" style="left:476px;top:555.0px;width:287px;height:29.5px;background:#fff"></div>
<div class="a" style="left:765px;top:555.0px;width:220px;height:29.5px;background:#fff"></div>
<div class="a" style="left:987px;top:555.0px;width:213px;height:29.5px;background:#fff"></div>
<div class="t num" style="left:278px;top:561.1px;width:41px;text-align:center">9</div>
<div class="t cell" style="left:321px;top:560.5px;width:148.3px">01-07-2017</div>
<div class="t cell" style="left:476px;top:560.5px;width:282.7px">53</div>
<div class="t cell" style="left:765px;top:560.5px;width:215px">11.63</div>
<div class="t cell" style="left:987px;top:560.5px;width:208.5px">3,411.00</div>
<div class="a" style="left:278px;top:586.5px;width:41px;height:29.5px;background:#f0f0f0"></div>
<div class="a" style="left:321px;top:586.5px;width:153px;height:29.5px;background:#d4eee0"></div>
<div class="a" style="left:476px;top:586.5px;width:287px;height:29.5px;background:#fff"></div>
<div class="a" style="left:765px;top:586.5px;width:220px;height:29.5px;background:#fff"></div>
<div class="a" style="left:987px;top:586.5px;width:213px;height:29.5px;background:#fff"></div>
<div class="t num" style="left:278px;top:592.6px;width:41px;text-align:center">10</div>
<div class="t cell" style="left:321px;top:592.0px;width:148.3px">01-06-2017</div>
<div class="t cell" style="left:476px;top:592.0px;width:282.7px">52</div>
<div class="t cell" style="left:765px;top:592.0px;width:215px">10.35</div>
<div class="t cell" style="left:987px;top:592.0px;width:208.5px">3,098.00</div>
<div class="a" style="left:278px;top:618.0px;width:41px;height:29.5px;background:#f0f0f0"></div>
<div class="a" style="left:321px;top:618.0px;width:153px;height:29.5px;background:#d4eee0"></div>
<div class="a" style="left:476px;top:618.0px;width:287px;height:29.5px;background:#fff"></div>
<div class="a" style="left:765px;top:618.0px;width:220px;height:29.5px;background:#fff"></div>
<div class="a" style="left:987px;top:618.0px;width:213px;height:29.5px;background:#fff"></div>
<div class="t num" style="left:278px;top:624.1px;width:41px;text-align:center">11</div>
<div class="t cell" style="left:321px;top:623.5px;width:148.3px">01-05-2017</div>
<div class="t cell" style="left:476px;top:623.5px;width:282.7px">49</div>
<div class="t cell" style="left:765px;top:623.5px;width:215px">9.36</div>
<div class="t cell" style="left:987px;top:623.5px;width:208.5px">2,797.00</div>
<div class="a" style="left:278px;top:649.5px;width:41px;height:29.5px;background:#f0f0f0"></div>
<div class="a" style="left:321px;top:649.5px;width:153px;height:29.5px;background:#d4eee0"></div>
<div class="a" style="left:476px;top:649.5px;width:287px;height:29.5px;background:#fff"></div>
<div class="a" style="left:765px;top:649.5px;width:220px;height:29.5px;background:#fff"></div>
<div class="a" style="left:987px;top:649.5px;width:213px;height:29.5px;background:#fff"></div>
<div class="t num" style="left:278px;top:655.6px;width:41px;text-align:center">12</div>
<div class="t cell" style="left:321px;top:655.0px;width:148.3px">01-04-2017</div>
<div class="t cell" style="left:476px;top:655.0px;width:282.7px">48</div>
<div class="t cell" style="left:765px;top:655.0px;width:215px">7.20</div>
<div class="t cell" style="left:987px;top:655.0px;width:208.5px">2,271.00</div>
<div class="a" style="left:278px;top:681.0px;width:41px;height:29.5px;background:#f0f0f0"></div>
<div class="a" style="left:321px;top:681.0px;width:153px;height:29.5px;background:#d4eee0"></div>
<div class="a" style="left:476px;top:681.0px;width:287px;height:29.5px;background:#fff"></div>
<div class="a" style="left:765px;top:681.0px;width:220px;height:29.5px;background:#fff"></div>
<div class="a" style="left:987px;top:681.0px;width:213px;height:29.5px;background:#fff"></div>
<div class="t num" style="left:278px;top:687.1px;width:41px;text-align:center">13</div>
<div class="t cell" style="left:321px;top:686.5px;width:148.3px">01-03-2017</div>
<div class="t cell" style="left:476px;top:686.5px;width:282.7px">44</div>
<div class="t cell" style="left:765px;top:686.5px;width:215px">6.37</div>
<div class="t cell" style="left:987px;top:686.5px;width:208.5px">2,425.00</div>
<div class="a" style="left:278px;top:712.5px;width:41px;height:29.5px;background:#f0f0f0"></div>
<div class="a" style="left:321px;top:712.5px;width:153px;height:29.5px;background:#d4eee0"></div>
<div class="a" style="left:476px;top:712.5px;width:287px;height:29.5px;background:#fff"></div>
<div class="a" style="left:765px;top:712.5px;width:220px;height:29.5px;background:#fff"></div>
<div class="a" style="left:987px;top:712.5px;width:213px;height:29.5px;background:#fff"></div>
<div class="t num" style="left:278px;top:718.6px;width:41px;text-align:center">14</div>
<div class="t cell" style="left:321px;top:718.0px;width:148.3px">01-02-2017</div>
<div class="t cell" style="left:476px;top:718.0px;width:282.7px">44</div>
<div class="t cell" style="left:765px;top:718.0px;width:215px">4.38</div>
<div class="t cell" style="left:987px;top:718.0px;width:208.5px">1,938.00</div>
<div class="a" style="left:278px;top:744.0px;width:41px;height:29.5px;background:#f0f0f0"></div>
<div class="a" style="left:321px;top:744.0px;width:153px;height:29.5px;background:#d4eee0"></div>
<div class="a" style="left:476px;top:744.0px;width:287px;height:29.5px;background:#fff"></div>
<div class="a" style="left:765px;top:744.0px;width:220px;height:29.5px;background:#fff"></div>
<div class="a" style="left:987px;top:744.0px;width:213px;height:29.5px;background:#fff"></div>
<div class="t num" style="left:278px;top:750.1px;width:41px;text-align:center">15</div>
<div class="t cell" style="left:321px;top:749.5px;width:148.3px">01-01-2017</div>
<div class="t cell" style="left:476px;top:749.5px;width:282.7px">36</div>
<div class="t cell" style="left:765px;top:749.5px;width:215px">4.46</div>
<div class="t cell" style="left:987px;top:749.5px;width:208.5px">1,696.00</div>
<div class="a" style="left:278px;top:775.5px;width:41px;height:29.5px;background:#f0f0f0"></div>
<div class="a" style="left:321px;top:775.5px;width:153px;height:29.5px;background:#d4eee0"></div>
<div class="a" style="left:476px;top:775.5px;width:287px;height:29.5px;background:#fff"></div>
<div class="a" style="left:765px;top:775.5px;width:220px;height:29.5px;background:#fff"></div>
<div class="a" style="left:987px;top:775.5px;width:213px;height:29.5px;background:#fff"></div>
<div class="t num" style="left:278px;top:781.6px;width:41px;text-align:center">16</div>
<div class="t cell" style="left:321px;top:781.0px;width:148.3px">01-12-2016</div>
<div class="t cell" style="left:476px;top:781.0px;width:282.7px">35</div>
<div class="t cell" style="left:765px;top:781.0px;width:215px">1.99</div>
<div class="t cell" style="left:987px;top:781.0px;width:208.5px">708.00</div>
<div class="a" style="left:278px;top:807.0px;width:41px;height:29.5px;background:#f0f0f0"></div>
<div class="a" style="left:321px;top:807.0px;width:153px;height:29.5px;background:#d4eee0"></div>
<div class="a" style="left:476px;top:807.0px;width:287px;height:29.5px;background:#fff"></div>
<div class="a" style="left:765px;top:807.0px;width:220px;height:29.5px;background:#fff"></div>
<div class="a" style="left:987px;top:807.0px;width:213px;height:29.5px;background:#fff"></div>
<div class="t num" style="left:278px;top:813.1px;width:41px;text-align:center">17</div>
<div class="t cell" style="left:321px;top:812.5px;width:148.3px">01-11-2016</div>
<div class="t cell" style="left:476px;top:812.5px;width:282.7px">30</div>
<div class="t cell" style="left:765px;top:812.5px;width:215px">0.29</div>
<div class="t cell" style="left:987px;top:812.5px;width:208.5px">100.00</div>
<div class="a" style="left:278px;top:838.5px;width:41px;height:29.5px;background:#f0f0f0"></div>
<div class="a" style="left:321px;top:838.5px;width:153px;height:29.5px;background:#d4eee0"></div>
<div class="a" style="left:476px;top:838.5px;width:287px;height:29.5px;background:#fff"></div>
<div class="a" style="left:765px;top:838.5px;width:220px;height:29.5px;background:#fff"></div>
<div class="a" style="left:987px;top:838.5px;width:213px;height:29.5px;background:#fff"></div>
<div class="t num" style="left:278px;top:844.6px;width:41px;text-align:center">18</div>
<div class="t cell" style="left:321px;top:844.0px;width:148.3px">01-10-2016</div>
<div class="t cell" style="left:476px;top:844.0px;width:282.7px">26</div>
<div class="t cell" style="left:765px;top:844.0px;width:215px">0.10</div>
<div class="t cell" style="left:987px;top:844.0px;width:208.5px">49.00</div>
<div class="a" style="left:278px;top:870.0px;width:41px;height:29.5px;background:#f0f0f0"></div>
<div class="a" style="left:321px;top:870.0px;width:153px;height:29.5px;background:#d4eee0"></div>
<div class="a" style="left:476px;top:870.0px;width:287px;height:29.5px;background:#fff"></div>
<div class="a" style="left:765px;top:870.0px;width:220px;height:29.5px;background:#fff"></div>
<div class="a" style="left:987px;top:870.0px;width:213px;height:29.5px;background:#fff"></div>
<div class="t num" style="left:278px;top:876.1px;width:41px;text-align:center">19</div>
<div class="t cell" style="left:321px;top:875.5px;width:148.3px">01-09-2016</div>
<div class="t cell" style="left:476px;top:875.5px;width:282.7px">25</div>
<div class="t cell" style="left:765px;top:875.5px;width:215px">0.09</div>
<div class="t cell" style="left:987px;top:875.5px;width:208.5px">33.00</div>
<div class="a" style="left:278px;top:901.5px;width:41px;height:29.5px;background:#f0f0f0"></div>
<div class="a" style="left:321px;top:901.5px;width:153px;height:29.5px;background:#d4eee0"></div>
<div class="a" style="left:476px;top:901.5px;width:287px;height:29.5px;background:#fff"></div>
<div class="a" style="left:765px;top:901.5px;width:220px;height:29.5px;background:#fff"></div>
<div class="a" style="left:987px;top:901.5px;width:213px;height:29.5px;background:#fff"></div>
<div class="t num" style="left:278px;top:907.6px;width:41px;text-align:center">20</div>
<div class="t cell" style="left:321px;top:907.0px;width:148.3px">01-08-2016</div>
<div class="t cell" style="left:476px;top:907.0px;width:282.7px">21</div>
<div class="t cell" style="left:765px;top:907.0px;width:215px">0.09</div>
<div class="t cell" style="left:987px;top:907.0px;width:208.5px">3.00</div>
<div class="a" style="left:278px;top:933.0px;width:41px;height:29.5px;background:#f0f0f0"></div>
<div class="a" style="left:321px;top:933.0px;width:153px;height:29.5px;background:#d4eee0"></div>
<div class="a" style="left:476px;top:933.0px;width:287px;height:29.5px;background:#fff"></div>
<div class="a" style="left:765px;top:933.0px;width:220px;height:29.5px;background:#fff"></div>
<div class="a" style="left:987px;top:933.0px;width:213px;height:29.5px;background:#fff"></div>
<div class="t num" style="left:278px;top:939.1px;width:41px;text-align:center">21</div>
<div class="t cell" style="left:321px;top:938.5px;width:148.3px">01-07-2016</div>
<div class="t cell" style="left:476px;top:938.5px;width:282.7px">21</div>
<div class="t cell" style="left:765px;top:938.5px;width:215px">0.09</div>
<div class="t cell" style="left:987px;top:938.5px;width:208.5px">0.00</div>
<div class="a" style="left:278px;top:964.5px;width:41px;height:10.5px;background:#f0f0f0"></div>
<div class="a" style="left:321px;top:964.5px;width:153px;height:10.5px;background:#d4eee0"></div>
<div class="a" style="left:476px;top:964.5px;width:287px;height:10.5px;background:#fff"></div>
<div class="a" style="left:765px;top:964.5px;width:220px;height:10.5px;background:#fff"></div>
<div class="a" style="left:987px;top:964.5px;width:213px;height:10.5px;background:#fff"></div>
<div class="t num" style="left:278px;top:970.6px;width:41px;text-align:center">22</div>

<!-- header content -->
<svg style="left:284px;top:278px" width="32" height="20" viewBox="0 0 32 20">
 <rect x="2.5" y="1.5" width="18.5" height="15.5" fill="#fff" stroke="#6f6f6f"/>
 <rect x="2" y="1" width="19.5" height="3.8" fill="#4a7ebb"/>
 <path d="M2.5 8.5H21M2.5 12.5H21M8.5 4.8V17M14.8 4.8V17" stroke="#9a9a9a"/>
 <path d="M22 13.5H29L25.5 17.5Z" fill="#6f6f6f"/>
</svg>
<svg style="left:324px;top:276px" width="24" height="23" viewBox="0 0 24 23">
 <rect x="1.5" y="1.5" width="20.5" height="19.5" fill="#fff" stroke="#6f6f6f"/>
 <rect x="1" y="1" width="21.5" height="4" fill="#6f6f6f"/>
 <path d="M1.5 9H22M1.5 13H22M1.5 17H22M5.5 5V21M9.5 5V21M13.5 5V21M17.5 5V21" stroke="#a8a8a8"/>
 <rect x="14" y="7.5" width="4" height="4" fill="#fff" stroke="#e0731f" stroke-width="1.3"/>
</svg>
<div class="t hdr" style="left:357px;top:277px">Months</div>
<div class="a" style="left:447px;top:275px;width:24px;height:24px;background:#fff;border:1px solid #a0a0a0"></div>
<svg style="left:454px;top:284px" width="11" height="7" viewBox="0 0 11 7"><path d="M0.5 0.5H10L5.25 5.8Z" fill="#6f6f6f"/></svg>

<svg style="left:476px;top:274px" width="30" height="26" viewBox="476 274 30 26">
 <path d="M480.3 285L484.2 282.2V294" fill="none" stroke="#555" stroke-width="1.7"/>
 <text x="486.6" y="289" font-family="Liberation Sans" font-size="16.2" fill="#555">2</text>
 <text x="494.3" y="296.2" font-family="Liberation Sans" font-size="16.2" fill="#555">3</text>
</svg>
<div class="t hdr" style="left:512px;top:277px;font-size:15.4px">No. of Banks live on UPI</div>
<div class="a" style="left:737px;top:275px;width:24px;height:24px;background:#fff;border:1px solid #a0a0a0"></div>
<svg style="left:744px;top:284px" width="11" height="7" viewBox="0 0 11 7"><path d="M0.5 0.5H10L5.25 5.8Z" fill="#6f6f6f"/></svg>

<div class="t" style="left:774.3px;top:274.3px;font-size:23px;height:26px;line-height:26px;color:#555;transform:scaleY(1.14)">$</div>
<div class="t hdr" style="left:801px;top:277px;font-size:15.8px">Volume (In Cr.)</div>
<div class="a" style="left:959px;top:275px;width:24px;height:24px;background:#fff;border:1px solid #a0a0a0"></div>
<svg style="left:966px;top:284px" width="11" height="7" viewBox="0 0 11 7"><path d="M0.5 0.5H10L5.25 5.8Z" fill="#6f6f6f"/></svg>

<div class="t" style="left:996.3px;top:274.3px;font-size:23px;height:26px;line-height:26px;color:#555;transform:scaleY(1.14)">$</div>
<div class="t hdr" style="left:1023px;top:277px;font-size:15.8px">Value (In Cr.)</div>
<div class="a" style="left:1173px;top:275px;width:24px;height:24px;background:#fff;border:1px solid #a0a0a0"></div>
<svg style="left:1180px;top:284px" width="11" height="7" viewBox="0 0 11 7"><path d="M0.5 0.5H10L5.25 5.8Z" fill="#6f6f6f"/></svg>

<!-- scrollbar -->
<div class="a" style="left:1490px;top:303px;width:25px;height:672px;background:#f0f0f0"></div>
<div class="a" style="left:1491px;top:354px;width:23px;height:240px;background:#c8c8c8"></div>
<svg style="left:1488px;top:324px" width="28" height="24" viewBox="1488 324 28 24">
 <path d="M1493.7 342.6V336L1502.4 328.8L1511.1 336V342.6L1502.4 335.6Z" fill="#666"/>
</svg>
<svg style="left:1488px;top:930px" width="28" height="24" viewBox="1488 930 28 24">
 <path d="M1493.3 935.4V942L1502.2 949.4L1511 942V935.4L1502.2 942.4Z" fill="#666"/>
</svg>

<!-- Right pane -->
<div class="a" style="left:1521px;top:206px;width:2px;height:769px;background:#d0d0d0"></div>
<div class="t" style="left:1543.5px;top:235px;font-size:27.7px;height:34px;line-height:34px;color:#3a8a5e;transform:scaleY(1.12);transform-origin:0 26.3px">Query Settings</div>
<svg style="left:1861px;top:241px" width="22" height="22" viewBox="0 0 22 22">
 <path d="M2.5 2.5L19.5 19.5M19.5 2.5L2.5 19.5" stroke="#555" stroke-width="1.25"/>
</svg>
<svg style="left:1536px;top:302px" width="12" height="12" viewBox="0 0 12 12"><path d="M11 1V11H1Z" fill="#444"/></svg>
<div class="t" style="left:1557px;top:299px;font-size:16.2px;font-weight:bold;color:#1e6e42">PROPERTIES</div>
<div class="t" style="left:1557px;top:329px;font-size:17.6px;color:#333">Name</div>
<div class="a" style="left:1557px;top:353px;width:327px;height:33px;border:2px solid #acacac;background:#fff"></div>
<div class="t" style="left:1566px;top:361px;font-size:16.1px;color:#444">npci_upi_stats</div>
<div class="t" style="left:1557px;top:399.7px;font-size:17.8px;color:#2e63a8">All Properties</div>
<svg style="left:1536px;top:453px" width="12" height="12" viewBox="0 0 12 12"><path d="M11 1V11H1Z" fill="#444"/></svg>
<div class="t" style="left:1557px;top:451px;font-size:16.35px;font-weight:bold;color:#1e6e42">APPLIED STEPS</div>
<div class="a" style="left:1557px;top:480px;width:327px;height:465px;border:2px solid #b9b9b9;background:#fff"></div>
<div class="t step" style="left:1589px;top:488.3px">Source</div>
<svg class="gear" style="left:1854px;top:487.8px" width="18" height="18" viewBox="0 0 18 18"><use href="#gearsym" width="18" height="18"/></svg>
<div class="t step" style="left:1589px;top:518.3px">Promoted Headers</div>
<svg class="gear" style="left:1854px;top:517.8px" width="18" height="18" viewBox="0 0 18 18"><use href="#gearsym" width="18" height="18"/></svg>
<div class="t step" style="left:1589px;top:548.3px">Changed Type</div>
<div class="t step" style="left:1589px;top:578.3px">Removed Columns</div>
<div class="t step" style="left:1589px;top:608.3px">Renamed Columns</div>
<div class="t step" style="left:1589px;top:638.3px">Changed Type1</div>
<div class="t step" style="left:1589px;top:668.3px">Filtered Rows</div>
<svg class="gear" style="left:1854px;top:667.8px" width="18" height="18" viewBox="0 0 18 18"><use href="#gearsym" width="18" height="18"/></svg>
<div class="t step" style="left:1589px;top:698.3px">Changed Type2</div>
<div class="t step" style="left:1589px;top:728.3px">Renamed Columns1</div>
<div class="t step" style="left:1589px;top:758.3px">Changed Type3</div>
<div class="t step" style="left:1589px;top:788.3px">Removed Columns1</div>
<div class="t step" style="left:1589px;top:818.3px">Changed Type4</div>
<div class="t step" style="left:1589px;top:848.3px">Replaced Errors</div>
<svg class="gear" style="left:1854px;top:847.8px" width="18" height="18" viewBox="0 0 18 18"><use href="#gearsym" width="18" height="18"/></svg>
<div class="t step" style="left:1589px;top:878.3px">Changed Type5</div>
<div class="a" style="left:1559px;top:902px;width:324px;height:30px;background:#d4eee0"></div>
<svg style="left:1566px;top:910px" width="17" height="16" viewBox="0 0 17 16"><path d="M1.5 1.5L15.5 14.5M15.5 1.5L1.5 14.5" stroke="#555" stroke-width="2"/></svg>
<div class="t step" style="left:1589px;top:908.3px">Renamed Columns2</div>

<!-- STATUS BAR -->
<div class="a" style="left:0;top:975px;width:1918px;height:33px;background:#217346"></div>
<div class="a" style="left:0;top:1008px;width:1918px;height:2px;background:#3c3a3a"></div>
<div class="a" style="left:0;top:1010px;width:1918px;height:4px;background:#1e1e1e"></div>
<div class="t" style="left:7px;top:982px;font-size:15.5px;color:#fff;transform:scaleY(1.05);transform-origin:0 15px">4 COLUMNS, 108 ROWS</div>
<div class="t" style="right:6px;top:982px;font-size:15.55px;color:#fff;transform:scaleY(1.05);transform-origin:0 15px">PREVIEW DOWNLOADED AT 02:54 AM</div>

</body></html>
